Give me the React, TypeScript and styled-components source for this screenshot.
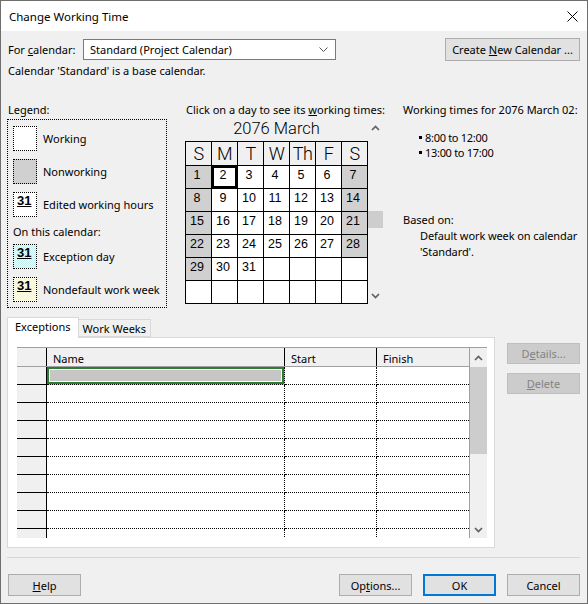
import React from "react";
import styled, { createGlobalStyle } from "styled-components";

const UI_FONT = `"Noto Sans", "Segoe UI", sans-serif`;
const CAL_FONT = `Roboto, "DejaVu Sans Condensed", sans-serif`;

const GlobalStyle = createGlobalStyle`
  * { box-sizing: border-box; }
  body {
    margin: 0;
    background: #f0f0f0;
    font-family: ${UI_FONT};
    font-size: 11px;
    color: #000;
  }
`;

const Window = styled.div`
  width: 588px;
  height: 604px;
  border: 1px solid #6e6e6e;
  background: #f0f0f0;
  display: flex;
  flex-direction: column;
  overflow: hidden;
`;

const TitleBar = styled.div`
  height: 30px;
  flex: none;
  background: #fff;
  display: flex;
  align-items: center;
  justify-content: space-between;
  padding: 0 9px 0 8px;
  font-size: 11.5px;
`;

const Body = styled.div`
  flex: 1;
  padding: 0 7px 0 6px;
  display: flex;
  flex-direction: column;
`;

const TopRow = styled.div`
  margin-top: 7px;
  height: 23px;
  display: flex;
  align-items: center;
`;

const FieldLabel = styled.span`
  width: 76px;
  padding-left: 1px;
`;

const Select = styled.div`
  width: 253px;
  height: 21px;
  background: #fff;
  border: 1px solid #7a7a7a;
  display: flex;
  align-items: center;
  justify-content: space-between;
  padding: 0 7px 0 6px;
`;

const Button = styled.div<{ $width?: number; $primary?: boolean; $disabled?: boolean }>`
  width: ${(p) => p.$width ?? 73}px;
  height: ${(p) => (p.$disabled ? 21 : 22)}px;
  flex: none;
  display: flex;
  align-items: center;
  justify-content: center;
  background: ${(p) => (p.$disabled ? "#cccccc" : "#e1e1e1")};
  color: ${(p) => (p.$disabled ? "#838383" : "#000")};
  border: ${(p) => (p.$primary ? "2px solid #0078d7" : p.$disabled ? "1px solid #bfbfbf" : "1px solid #adadad")};
`;

const CreateButton = styled(Button)`
  margin-left: auto;
  height: 23px;
`;

const InfoLine = styled.div`
  margin-top: 3px;
  line-height: 14px;
  padding-left: 1px;
`;

const Main = styled.div`
  margin-top: 25px;
  display: flex;
  align-items: flex-start;
`;

const Column = styled.div<{ $width: number; $gap?: number }>`
  width: ${(p) => p.$width}px;
  margin-left: ${(p) => p.$gap ?? 0}px;
  flex: none;
  display: flex;
  flex-direction: column;
`;

const SectionLabel = styled.div`
  line-height: 14px;
  padding-left: 1px;
  white-space: nowrap;
`;

const LegendBox = styled.div`
  margin-top: 2px;
  height: 189px;
  border: 1px dotted #000;
  padding: 6px 5px;
  display: flex;
  flex-direction: column;
`;

const LegendItem = styled.div<{ $gapAfter?: number }>`
  display: flex;
  align-items: center;
  gap: 6px;
  height: 25px;
  margin-bottom: ${(p) => p.$gapAfter ?? 8}px;
`;

const Swatch = styled.div<{ $bg: string }>`
  width: 24px;
  height: 25px;
  flex: none;
  border: 1px dotted #000;
  background: ${(p) => p.$bg};
  padding: 2px 0 0 3px;
  font-family: "Liberation Sans", Arial, sans-serif;
  font-weight: bold;
  font-size: 13px;
  line-height: 11px;
  text-decoration: underline;
  text-underline-offset: 1px;
`;

const OnThisCalendar = styled.div`
  line-height: 14px;
  margin: 0 0 5px 0;
`;

const CalendarRow = styled.div`
  margin-top: 2px;
  display: flex;
`;

const CalendarLeft = styled.div`
  width: 183px;
  display: flex;
  flex-direction: column;
`;

const MonthTitle = styled.div`
  height: 22px;
  text-align: center;
  font-family: ${CAL_FONT};
  font-weight: 300;
  font-size: 16.5px;
  line-height: 19px;
`;

const DayGrid = styled.div`
  display: grid;
  grid-template-columns: repeat(7, 26px);
  grid-template-rows: 24px repeat(6, 23px);
  border-left: 1px solid #000;
  border-top: 1px solid #000;
`;

const DayHead = styled.div`
  border-right: 1px solid #000;
  border-bottom: 1px solid #000;
  background: #f0f0f0;
  font-family: ${CAL_FONT};
  font-weight: 300;
  font-size: 18px;
  line-height: 23px;
  text-align: center;
  letter-spacing: -0.5px;
`;

const DayCell = styled.div<{ $off?: boolean; $selected?: boolean }>`
  border-right: 1px solid #000;
  border-bottom: 1px solid #000;
  background: ${(p) => (p.$off ? "#d0d0d0" : "#fff")};
  box-shadow: ${(p) => (p.$selected ? "inset 0 0 0 2px #000" : "none")};
  font-family: "Liberation Sans", Arial, sans-serif;
  font-size: 12.5px;
  line-height: 14px;
  padding: 2px 3px 0 0;
  text-align: center;
`;

const ScrollTrack = styled.div<{ $width: number; $border?: boolean }>`
  width: ${(p) => p.$width}px;
  flex: none;
  display: flex;
  flex-direction: column;
  align-items: center;
  border-left: ${(p) => (p.$border ? "1px solid #a0a0a0" : "none")};
  background: #f0f0f0;
`;

const ArrowBox = styled.div<{ $height: number }>`
  height: ${(p) => p.$height}px;
  width: 100%;
  display: flex;
  align-items: center;
  justify-content: center;
  flex: none;
`;

const Thumb = styled.div<{ $top: number; $height: number }>`
  margin-top: ${(p) => p.$top}px;
  height: ${(p) => p.$height}px;
  width: 100%;
  background: #cdcdcd;
  flex: none;
`;

const TrackFill = styled.div`
  flex: 1;
`;

const Bullets = styled.ul`
  margin: 13px 0 0 0;
  padding: 0 0 0 17px;
  list-style: none;
  letter-spacing: -0.3px;
`;

const Bullet = styled.li`
  line-height: 15px;
  display: flex;
  align-items: center;
  gap: 3px;
  &::before {
    content: "";
    width: 3px;
    height: 3px;
    background: #000;
  }
`;

const BasedOn = styled(SectionLabel)`
  margin-top: 53px;
`;

const BasedText = styled.div`
  padding-left: 18px;
  margin-top: 2px;
  line-height: 14px;
  white-space: nowrap;
  letter-spacing: -0.1px;
`;

const Lower = styled.div`
  margin-top: 9px;
  display: flex;
  align-items: flex-start;
`;

const TabArea = styled.div`
  width: 488px;
  flex: none;
  display: flex;
  flex-direction: column;
`;

const TabStrip = styled.div`
  height: 21px;
  display: flex;
  align-items: flex-start;
  position: relative;
  z-index: 1;
`;

const Tab = styled.div<{ $active?: boolean }>`
  height: ${(p) => (p.$active ? 21 : 18)}px;
  margin-top: ${(p) => (p.$active ? 0 : 2)}px;
  padding: 0 ${(p) => (p.$active ? 7 : 4)}px;
  border: 1px solid #d9d9d9;
  border-bottom: ${(p) => (p.$active ? "none" : "1px solid #d9d9d9")};
  margin-left: ${(p) => (p.$active ? 0 : -1)}px;
  background: ${(p) => (p.$active ? "#fff" : "#f0f0f0")};
  line-height: ${(p) => (p.$active ? 18 : 17)}px;
`;

const TabPanel = styled.div`
  margin-top: -1px;
  height: 211px;
  background: #fff;
  border: 1px solid #d9d9d9;
  padding: 9px 7px 8px 9px;
`;

const Table = styled.div`
  height: 191px;
  display: flex;
  border-top: 1px solid #a0a0a0;
  overflow: hidden;
`;

const TableBody = styled.div`
  width: 452px;
  flex: none;
  display: flex;
  flex-direction: column;
`;

const HeaderRow = styled.div`
  height: 19px;
  flex: none;
  display: flex;
  background: #f0f0f0;
  border-bottom: 1px solid #a0a0a0;
`;

const HeadCell = styled.div<{ $width: number; $last?: boolean }>`
  width: ${(p) => p.$width}px;
  flex: none;
  border-right: ${(p) => (p.$last ? "none" : "1px solid #000")};
  padding: 3px 0 0 6px;
  line-height: 16px;
`;

const DataRow = styled.div`
  height: 18px;
  flex: none;
  display: flex;
`;

const RowHead = styled.div`
  width: 30px;
  flex: none;
  background: #f0f0f0;
  border-right: 1px solid #000;
  border-bottom: 1px solid #000;
`;

const DataCell = styled.div<{ $width: number; $last?: boolean; $selected?: boolean }>`
  width: ${(p) => p.$width}px;
  flex: none;
  border-bottom: 1px dotted #000;
  border-right: ${(p) => (p.$last ? "none" : "1px dotted #000")};
  background: ${(p) => (p.$selected ? "#c6c6c6" : "#fff")};
  box-shadow: ${(p) => (p.$selected ? "inset 0 0 0 2px #2e7d32, inset 0 0 0 3px #fff" : "none")};
`;

const SideButtons = styled.div`
  margin: 26px 0 0 12px;
  display: flex;
  flex-direction: column;
  gap: 9px;
`;

const Separator = styled.div`
  margin-top: 9px;
  height: 1px;
  background: #d7d7d7;
`;

const BottomRow = styled.div`
  margin-top: 16px;
  display: flex;
  gap: 11px;
  padding-left: 1px;
`;

const Spacer = styled.div`
  flex: 1;
`;

function Chevron({ up, color = "#606060" }: { up?: boolean; color?: string }) {
  return (
    <svg width="9" height="6" viewBox="0 0 9 6">
      <polyline
        points={up ? "1,5 4.5,1.5 8,5" : "1,1 4.5,4.5 8,1"}
        fill="none"
        stroke={color}
        strokeWidth="1.7"
      />
    </svg>
  );
}

const HEADS = ["S", "M", "T", "W", "Th", "F", "S"];
const WEEKS: (number | null)[][] = [
  [1, 2, 3, 4, 5, 6, 7],
  [8, 9, 10, 11, 12, 13, 14],
  [15, 16, 17, 18, 19, 20, 21],
  [22, 23, 24, 25, 26, 27, 28],
  [29, 30, 31, null, null, null, null],
  [null, null, null, null, null, null, null],
];

const CYAN = "repeating-conic-gradient(#c4eeee 0 25%, #e6ffff 0 50%) 0 0 / 2px 2px";
const YELLOW = "repeating-conic-gradient(#f6f6c4 0 25%, #ffffe6 0 50%) 0 0 / 2px 2px";

export default function App() {
  return (
    <>
      <GlobalStyle />
      <Window>
        <TitleBar>
          <span>Change Working Time</span>
          <svg width="11" height="11" viewBox="0 0 11 11">
            <path d="M0.5 0.5 L10.5 10.5 M10.5 0.5 L0.5 10.5" stroke="#000" strokeWidth="1" />
          </svg>
        </TitleBar>
        <Body>
          <TopRow>
            <FieldLabel>
              For <u>c</u>alendar:
            </FieldLabel>
            <Select>
              <span>Standard (Project Calendar)</span>
              <svg width="9" height="5" viewBox="0 0 9 5">
                <polyline points="0.5,0.5 4.5,4.5 8.5,0.5" fill="none" stroke="#555" strokeWidth="1" />
              </svg>
            </Select>
            <CreateButton $width={135}>
              <span>
                Create <u>N</u>ew Calendar ...
              </span>
            </CreateButton>
          </TopRow>
          <InfoLine>Calendar 'Standard' is a base calendar.</InfoLine>

          <Main>
            <Column $width={160}>
              <SectionLabel>Legend:</SectionLabel>
              <LegendBox>
                <LegendItem>
                  <Swatch $bg="#fff" />
                  Working
                </LegendItem>
                <LegendItem>
                  <Swatch $bg="#d0d0d0" />
                  Nonworking
                </LegendItem>
                <LegendItem>
                  <Swatch $bg="#fff">31</Swatch>
                  Edited working hours
                </LegendItem>
                <OnThisCalendar>On this calendar:</OnThisCalendar>
                <LegendItem>
                  <Swatch $bg={CYAN}>31</Swatch>
                  Exception day
                </LegendItem>
                <LegendItem $gapAfter={0}>
                  <Swatch $bg={YELLOW}>31</Swatch>
                  Nondefault work week
                </LegendItem>
              </LegendBox>
            </Column>

            <Column $width={198} $gap={18}>
              <SectionLabel>
                Click on a day to see its <u>w</u>orking times:
              </SectionLabel>
              <CalendarRow>
                <CalendarLeft>
                  <MonthTitle>2076 March</MonthTitle>
                  <DayGrid>
                    {HEADS.map((h, i) => (
                      <DayHead key={i}>{h}</DayHead>
                    ))}
                    {WEEKS.map((week, r) =>
                      week.map((d, c) => (
                        <DayCell
                          key={`${r}-${c}`}
                          $off={d !== null && (c === 0 || c === 6)}
                          $selected={d === 2}
                        >
                          {d ?? ""}
                        </DayCell>
                      ))
                    )}
                  </DayGrid>
                </CalendarLeft>
                <ScrollTrack $width={15}>
                  <ArrowBox $height={17}>
                    <Chevron up />
                  </ArrowBox>
                  <Thumb $top={75} $height={17} />
                  <TrackFill />
                  <ArrowBox $height={17}>
                    <Chevron />
                  </ArrowBox>
                </ScrollTrack>
              </CalendarRow>
            </Column>

            <Column $width={178} $gap={19}>
              <SectionLabel>Working times for 2076 March 02:</SectionLabel>
              <Bullets>
                <Bullet>8:00 to 12:00</Bullet>
                <Bullet>13:00 to 17:00</Bullet>
              </Bullets>
              <BasedOn>Based on:</BasedOn>
              <BasedText>Default work week on calendar</BasedText>
              <BasedText>'Standard'.</BasedText>
            </Column>
          </Main>

          <Lower>
            <TabArea>
              <TabStrip>
                <Tab $active>Exceptions</Tab>
                <Tab>Work Weeks</Tab>
              </TabStrip>
              <TabPanel>
                <Table>
                  <TableBody>
                    <HeaderRow>
                      <HeadCell $width={30} />
                      <HeadCell $width={238}>Name</HeadCell>
                      <HeadCell $width={92}>Start</HeadCell>
                      <HeadCell $width={92} $last>
                        Finish
                      </HeadCell>
                    </HeaderRow>
                    {Array.from({ length: 10 }).map((_, i) => (
                      <DataRow key={i}>
                        <RowHead />
                        <DataCell $width={238} $selected={i === 0} />
                        <DataCell $width={92} />
                        <DataCell $width={92} $last />
                      </DataRow>
                    ))}
                  </TableBody>
                  <ScrollTrack $width={18} $border>
                    <ArrowBox $height={19}>
                      <Chevron up />
                    </ArrowBox>
                    <Thumb $top={0} $height={87} />
                    <TrackFill />
                    <ArrowBox $height={17}>
                      <Chevron />
                    </ArrowBox>
                  </ScrollTrack>
                </Table>
              </TabPanel>
            </TabArea>
            <SideButtons>
              <Button $disabled>
                <span>
                  D<u>e</u>tails...
                </span>
              </Button>
              <Button $disabled>
                <span>
                  <u>D</u>elete
                </span>
              </Button>
            </SideButtons>
          </Lower>

          <Separator />

          <BottomRow>
            <Button>
              <span>
                <u>H</u>elp
              </span>
            </Button>
            <Spacer />
            <Button>
              <span>
                Op<u>t</u>ions...
              </span>
            </Button>
            <Button $primary>OK</Button>
            <Button>Cancel</Button>
          </BottomRow>
        </Body>
      </Window>
    </>
  );
}
